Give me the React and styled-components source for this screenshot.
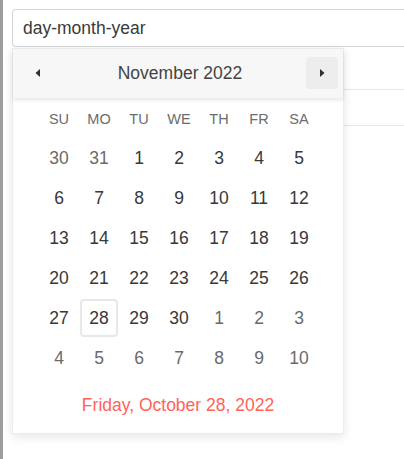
import React from 'react';
import styled, { createGlobalStyle } from 'styled-components';

const GlobalStyle = createGlobalStyle`
  html, body {
    margin: 0;
    padding: 0;
    background: #fff;
    overflow: hidden;
    font-family: "Liberation Sans", Arial, sans-serif;
  }
`;

const Page = styled.div`
  min-height: 100vh;
  border-left: 3px solid #9d9d9d;
  padding: 9px 0 0 9px;
  box-sizing: border-box;
`;

const Field = styled.div`
  position: relative;
`;

// the field runs on past the right edge of the window, so no right border shows
const Input = styled.div`
  height: 38px;
  box-sizing: border-box;
  border: 1px solid #d6d6d6;
  border-right: none;
  border-radius: 4px 0 0 4px;
  padding: 0 10px;
  display: flex;
  align-items: center;
  font-size: 17.5px;
  color: #3a3a3a;
`;

const Rows = styled.div`
  display: flex;
  flex-direction: column;
`;

const Row = styled.div`
  height: ${p => p.h}px;
  border-bottom: 1px solid #e8e8e8;
`;

const Popup = styled.div`
  position: absolute;
  top: 39px;
  left: 0;
  width: 332px;
  background: #fff;
  border: 1px solid #ececec;
  box-sizing: border-box;
  box-shadow: 0 3px 10px rgba(0, 0, 0, 0.1);
`;

const Header = styled.div`
  height: 49px;
  display: flex;
  align-items: center;
  justify-content: space-between;
  padding: 0 5px 1px 9px;
  box-sizing: border-box;
  background: #f7f7f7;
  box-shadow: 0 2px 4px rgba(0, 0, 0, 0.1);
  position: relative;
`;

const NavButton = styled.div`
  width: 32px;
  height: 32px;
  border-radius: 4px;
  background: ${p => (p.hover ? '#ededed' : 'transparent')};
  display: flex;
  align-items: center;
  justify-content: center;
  color: #2f2f2f;
`;

const Title = styled.div`
  font-size: 17.5px;
  color: #444;
`;

const Body = styled.div`
  padding: 6px 26px 0;
`;

const Grid = styled.div`
  display: grid;
  grid-template-columns: repeat(7, 40px);
`;

const WeekDay = styled.div`
  height: 30px;
  margin-bottom: 4px;
  display: flex;
  align-items: center;
  justify-content: center;
  font-size: 14.5px;
  color: #6c6c6c;
`;

const Day = styled.div`
  height: 40px;
  display: flex;
  align-items: center;
  justify-content: center;
  font-size: 17.5px;
  color: ${p => (p.other ? '#6a6a6a' : '#383838')};
  span {
    width: 38px;
    height: 38px;
    box-sizing: border-box;
    display: flex;
    align-items: center;
    justify-content: center;
    border-radius: 4px;
    border: 2px solid ${p => (p.focus ? '#e8e8e8' : 'transparent')};
  }
`;

const Footer = styled.div`
  padding: 17px 0 18px;
  text-align: center;
  font-size: 17.5px;
  line-height: 20px;
  color: #ff6358;
`;

const Arrow = ({ dir }) => (
  <svg width="8" height="10" viewBox="0 0 8 10">
    {dir === 'left'
      ? <path d="M6 1 L1.5 5 L6 9 Z" fill="currentColor" />
      : <path d="M2 1 L6.5 5 L2 9 Z" fill="currentColor" />}
  </svg>
);

const weekDays = ['SU', 'MO', 'TU', 'WE', 'TH', 'FR', 'SA'];

const days = [
  [30, true], [31, true],
  ...Array.from({ length: 30 }, (_, i) => [i + 1, false]),
  ...[1, 2, 3, 4, 5, 6, 7, 8, 9, 10].map(d => [d, true]),
];

export default function App() {
  return (
    <>
      <GlobalStyle />
      <Page>
        <Field>
          <Input>day-month-year</Input>
          <Rows>
            <Row h={42} />
            <Row h={35} />
          </Rows>
          <Popup>
            <Header>
              <NavButton><Arrow dir="left" /></NavButton>
              <Title>November 2022</Title>
              <NavButton hover><Arrow dir="right" /></NavButton>
            </Header>
            <Body>
              <Grid>
                {weekDays.map(w => <WeekDay key={w}>{w}</WeekDay>)}
                {days.map(([d, other], i) => (
                  <Day key={i} other={other} focus={i === 29}>
                    <span>{d}</span>
                  </Day>
                ))}
              </Grid>
            </Body>
            <Footer>Friday, October 28, 2022</Footer>
          </Popup>
        </Field>
      </Page>
    </>
  );
}
